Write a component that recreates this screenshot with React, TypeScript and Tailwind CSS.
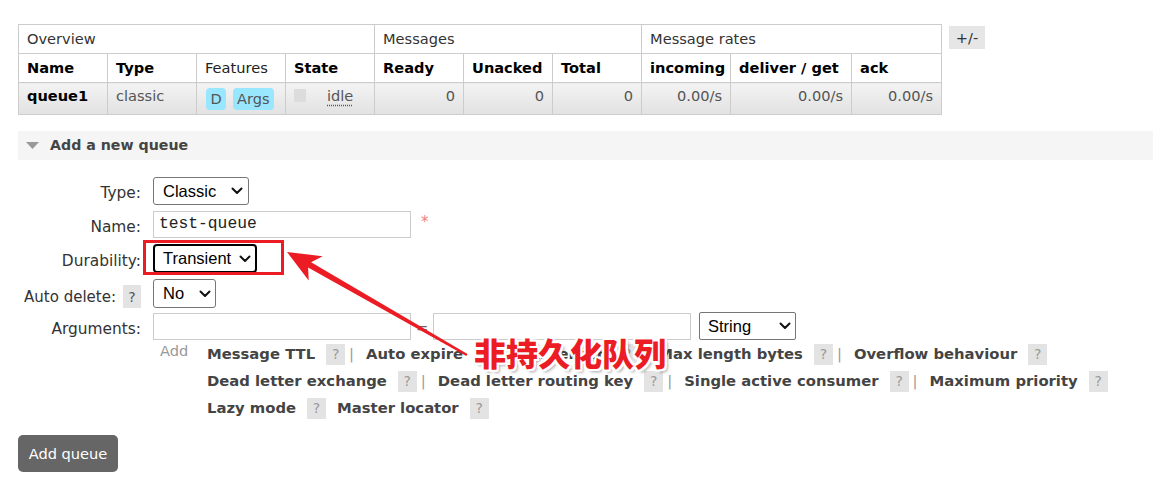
import React from "react";

const FONT = "font-['DejaVu_Sans',Verdana,sans-serif]";

function Chevron() {
  return (
    <svg width="12" height="8" viewBox="0 0 12 8" className="shrink-0">
      <path d="M1.5 1.5 L6 6 L10.5 1.5" fill="none" stroke="#111" strokeWidth="2" strokeLinecap="round" strokeLinejoin="round" />
    </svg>
  );
}

function Help({ className = "" }: { className?: string }) {
  return (
    <span className={"inline-flex items-center justify-center w-[19px] h-[21px] bg-[#e3e3e3] text-[#999] text-[14px] font-normal " + className}>?</span>
  );
}

function Sep() {
  return <span className="ml-[4px] mr-[12px] text-[#999] font-normal">|</span>;
}

function Link({ children }: { children: React.ReactNode }) {
  return <span className="font-bold text-[#444]">{children}</span>;
}

const th = "border border-[#ccc] px-[8px] text-left";
const tdBase = "border border-[#ccc] px-[8px] bg-linear-to-b from-[#f3f3f3] to-[#e2e2e2]";
const td = tdBase + " pb-[5px]";
const label = "w-[123px] pt-[10px] leading-[20px] text-right text-[#333] text-[15.4px]";

export default function App() {
  return (
    <div className={"relative w-[1153px] h-[480px] bg-white text-[14.6px] text-[#222] " + FONT}>
      <div className="pt-[24px] pl-[18px]">
        {/* Table */}
        <div className="flex items-start gap-[7px]">
          <table className="table-fixed border-collapse w-[923px]">
            <colgroup>
              <col className="w-[89px]" />
              <col className="w-[89px]" />
              <col className="w-[89px]" />
              <col className="w-[89px]" />
              <col className="w-[89px]" />
              <col className="w-[89px]" />
              <col className="w-[89px]" />
              <col className="w-[89px]" />
              <col className="w-[121px]" />
              <col className="w-[90px]" />
            </colgroup>
            <thead>
              <tr className="h-[29px]">
                <th colSpan={4} className={th + " font-normal text-[#333]"}>Overview</th>
                <th colSpan={3} className={th + " font-normal text-[#333]"}>Messages</th>
                <th colSpan={3} className={th + " font-normal text-[#333]"}>Message rates</th>
              </tr>
              <tr className="h-[29px]">
                <th className={th + " font-bold text-black"}>Name</th>
                <th className={th + " font-bold text-black"}>Type</th>
                <th className={th + " font-normal text-[#222]"}>Features</th>
                <th className={th + " font-bold text-black"}>State</th>
                <th className={th + " font-bold text-black"}>Ready</th>
                <th className={th + " font-bold text-black"}>Unacked</th>
                <th className={th + " font-bold text-black"}>Total</th>
                <th className={th + " font-bold text-black"}>incoming</th>
                <th className={th + " font-bold text-black whitespace-nowrap"}>deliver / get</th>
                <th className={th + " font-bold text-black"}>ack</th>
              </tr>
            </thead>
            <tbody>
              <tr className="h-[32px]">
                <td className={td + " font-bold text-black"}>queue1</td>
                <td className={td + " text-[#555]"}>classic</td>
                <td className={tdBase + " text-[#555]"}>
                  <div className="flex items-center gap-[7px] pl-[1px]">
                    <span className="inline-flex items-center justify-center h-[22px] w-[20px] rounded-[4px] bg-[#99e6ff]">D</span>
                    <span className="inline-flex items-center justify-center h-[22px] px-[4px] rounded-[4px] bg-[#99e6ff]">Args</span>
                  </div>
                </td>
                <td className={td + " text-[#555]"}>
                  <div className="flex items-center">
                    <span className="inline-block w-[12px] h-[13px] bg-[#dcdcdc]" />
                    <span className="ml-[21px] underline decoration-dotted decoration-[#555] underline-offset-[4px]">idle</span>
                  </div>
                </td>
                <td className={td + " text-right text-[#555]"}>0</td>
                <td className={td + " text-right text-[#555]"}>0</td>
                <td className={td + " text-right text-[#555]"}>0</td>
                <td className={td + " text-right text-[#555]"}>0.00/s</td>
                <td className={td + " text-right text-[#555]"}>0.00/s</td>
                <td className={td + " text-right text-[#555]"}>0.00/s</td>
              </tr>
            </tbody>
          </table>
          <span className="mt-[2px] inline-flex items-center justify-center w-[36px] h-[23px] bg-[#e6e6e6] text-[#333]">+/-</span>
        </div>

        {/* Section header */}
        <div className="mt-[16px] h-[29px] bg-[#f5f5f5] flex items-center pl-[8px]">
          <svg width="13" height="7" viewBox="0 0 13 7"><path d="M0 0 H13 L6.5 7 Z" fill="#999" /></svg>
          <span className="ml-[11px] font-bold text-[#444] text-[14.2px]">Add a new queue</span>
        </div>

        {/* Form */}
        <div className="mt-[13px] flex flex-col">
          {/* Type */}
          <div className="flex items-start h-[34px] gap-[12px]">
            <div className={label}>Type:</div>
            <div className="mt-[4px] w-[96px] h-[28px] border border-[#767676] rounded-[3px] bg-white flex items-center justify-between pl-[9px] pr-[5px] font-['Liberation_Sans',Arial,sans-serif] text-[16.5px] text-black">
              <span>Classic</span>
              <Chevron />
            </div>
          </div>
          {/* Name */}
          <div className="flex items-start h-[34px] gap-[12px]">
            <div className={label}>Name:</div>
            <div className="mt-[4px] w-[258px] h-[27px] border border-[#ccc] bg-white flex items-center pl-[5px] font-['Liberation_Mono','Courier_New',monospace] text-[16.3px] text-[#222]">test-queue</div>
            <span className="mt-[4px] ml-[-2px] text-[#f08080] text-[15px]">*</span>
          </div>
          {/* Durability */}
          <div className="flex items-start h-[34px] gap-[12px]">
            <div className={label}>Durability:</div>
            <div className="mt-[3px] w-[104px] h-[29px] border-2 border-black rounded-[4px] bg-white flex items-center justify-between pl-[8px] pr-[4px] font-['Liberation_Sans',Arial,sans-serif] text-[16.5px] text-black">
              <span>Transient</span>
              <Chevron />
            </div>
          </div>
          {/* Auto delete */}
          <div className="flex items-start h-[34px] gap-[12px]">
            <div className={label + " flex justify-end items-center"}>
              <span className="text-[15px]">Auto delete:</span>
              <span className="ml-[7px] inline-flex items-center justify-center w-[18px] h-[23px] bg-[#e3e3e3] text-[#555] text-[14px]">?</span>
            </div>
            <div className="mt-[4px] w-[63px] h-[29px] border border-[#767676] rounded-[3px] bg-white flex items-center justify-between pl-[9px] pr-[4px] font-['Liberation_Sans',Arial,sans-serif] text-[16.5px] text-black">
              <span>No</span>
              <Chevron />
            </div>
          </div>
          {/* Arguments */}
          <div className="flex items-start h-[34px] gap-[12px]">
            <div className={label}>Arguments:</div>
            <div className="mt-[3px] flex items-center">
              <div className="w-[258px] h-[27px] border border-[#ccc] bg-white" />
              <span className="w-[22px] text-center text-[#666] pt-[4px]">=</span>
              <div className="w-[258px] h-[27px] border border-[#ccc] bg-white" />
              <div className="ml-[8px] w-[97px] h-[28px] border border-[#767676] rounded-[2px] bg-white flex items-center justify-between pl-[8px] pr-[4px] font-['Liberation_Sans',Arial,sans-serif] text-[16.5px] text-black">
                <span>String</span>
                <Chevron />
              </div>
            </div>
          </div>
          {/* Add links */}
          <div className="flex items-start gap-[12px] mt-[-2px]">
            <div className="w-[123px]" />
            <div className="flex items-start">
              <span className="ml-[7px] w-[47px] text-[#999] leading-[20px]">Add</span>
              <div className="flex flex-col whitespace-nowrap text-[14.8px]">
                <div className="flex items-center h-[27px]">
                  <Link>Message TTL</Link><Help className="ml-[11px]" /><Sep />
                  <Link>Auto expire</Link><Help className="ml-[11px]" /><Sep />
                  <Link>Max length</Link><Help className="ml-[11px]" /><Sep />
                  <Link>Max length bytes</Link><Help className="ml-[11px]" /><Sep />
                  <Link>Overflow behaviour</Link><Help className="ml-[11px]" />
                </div>
                <div className="flex items-center h-[27px]">
                  <Link>Dead letter exchange</Link><Help className="ml-[11px]" /><Sep />
                  <Link>Dead letter routing key</Link><Help className="ml-[11px]" /><Sep />
                  <Link>Single active consumer</Link><Help className="ml-[11px]" /><Sep />
                  <Link>Maximum priority</Link><Help className="ml-[11px]" />
                </div>
                <div className="flex items-center h-[27px]">
                  <Link>Lazy mode</Link><Help className="ml-[11px]" />
                  <span className="ml-[11px]"><Link>Master locator</Link></span><Help className="ml-[11px]" />
                </div>
              </div>
            </div>
          </div>
        </div>

        {/* Button */}
        <button className="mt-[13px] w-[100px] h-[37px] rounded-[5px] bg-[#666] text-white text-[14.6px] flex items-center justify-center">Add queue</button>
      </div>

      {/* Annotation overlays */}
      <div className="absolute left-[143px] top-[240px] w-[141px] h-[35px] border-[3px] border-[#ec1c24] pointer-events-none" />
      <svg className="absolute left-0 top-0 pointer-events-none" width="1153" height="480" viewBox="0 0 1153 480">
        <polygon
          points="287,252 322.6,256.2 311.1,262.3 467.5,353.9 466.3,355.9 308.1,267.5 308.7,280.6"
          fill="#ec1c24"
        />
      </svg>
      <div className="absolute left-[474px] top-[336px] font-['Noto_Sans_CJK_SC',sans-serif] font-black text-[32px] leading-none text-[#ec1c24] whitespace-nowrap [text-shadow:2px_0_0_#fff,-2px_0_0_#fff,0_2px_0_#fff,0_-2px_0_#fff,2px_2px_0_#fff,-2px_-2px_0_#fff,2px_-2px_0_#fff,-2px_2px_0_#fff,3px_3px_3px_rgba(0,0,0,0.35)]">
        非持久化队列
      </div>
    </div>
  );
}
